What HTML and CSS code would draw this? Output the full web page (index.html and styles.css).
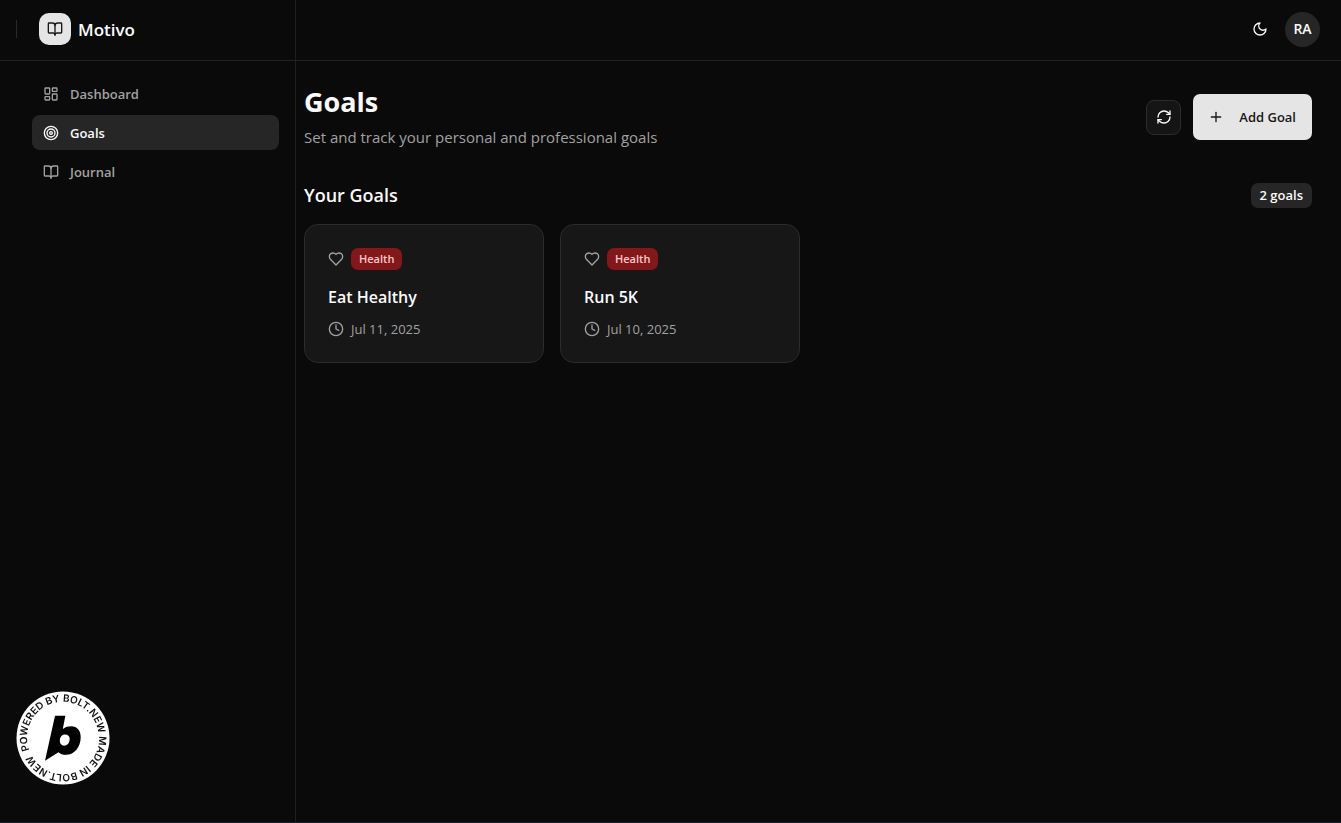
FILE: index.html
```html
<!DOCTYPE html>
<html lang="en">
<head>
  <meta charset="utf-8">
  <meta name="viewport" content="width=device-width, initial-scale=1">
  <title>Motivo - Goals</title>
  <link rel="stylesheet" href="styles.css">
</head>
<body>
  <svg class="sprite" aria-hidden="true">
    <symbol id="book" viewBox="0 0 24 24"><path d="M12 7v14"/><path d="M3 18a1 1 0 0 1-1-1V4a1 1 0 0 1 1-1h5a4 4 0 0 1 4 4 4 4 0 0 1 4-4h5a1 1 0 0 1 1 1v13a1 1 0 0 1-1 1h-6a3 3 0 0 0-3 3 3 3 0 0 0-3-3z"/></symbol>
    <symbol id="heart" viewBox="0 0 24 24"><path d="M19 14c1.49-1.46 3-3.21 3-5.5A5.5 5.5 0 0 0 16.5 3c-1.76 0-3 .5-4.5 2-1.5-1.5-2.74-2-4.5-2A5.5 5.5 0 0 0 2 8.500c0 2.300 1.500 4.050 3 5.500l7 7Z"/></symbol>
    <symbol id="clock" viewBox="0 0 24 24"><circle cx="12" cy="12" r="10"/><path d="M12 6v6l4 2"/></symbol>
  </svg>
  <div class="app">
    <aside class="sidebar">
      <div class="brand">
        <span class="brand-rule"></span>
        <span class="brand-mark"><svg class="icon"><use href="#book"/></svg></span>
        <span class="brand-name">Motivo</span>
      </div>
      <nav class="nav" aria-label="Main">
        <a class="nav-link" href="#dashboard">
          <svg class="icon" viewBox="0 0 24 24"><rect width="7" height="9" x="3" y="3" rx="1"/><rect width="7" height="5" x="14" y="3" rx="1"/><rect width="7" height="9" x="14" y="12" rx="1"/><rect width="7" height="5" x="3" y="16" rx="1"/></svg>
          Dashboard
        </a>
        <a class="nav-link active" href="#goals" aria-current="page">
          <svg class="icon" viewBox="0 0 24 24"><circle cx="12" cy="12" r="10"/><circle cx="12" cy="12" r="6"/><circle cx="12" cy="12" r="2"/></svg>
          Goals
        </a>
        <a class="nav-link" href="#journal">
          <svg class="icon"><use href="#book"/></svg>
          Journal
        </a>
      </nav>
    </aside>

    <div class="content">
      <header class="topbar">
        <button class="theme-button" type="button" aria-label="Toggle theme">
          <svg class="icon" viewBox="0 0 24 24"><path d="M12 3a6 6 0 0 0 9 9 9 9 0 1 1-9-9Z"/></svg>
        </button>
        <button class="avatar" type="button">RA</button>
      </header>

      <main class="main">
        <div class="page-head">
          <div>
            <h1 class="page-title">Goals</h1>
            <p class="page-subtitle">Set and track your personal and professional goals</p>
          </div>
          <div class="actions">
            <button class="refresh-button" type="button" aria-label="Refresh">
              <svg class="icon" viewBox="0 0 24 24"><path d="M3 12a9 9 0 0 1 9-9 9.750 9.750 0 0 1 6.740 2.740L21 8"/><path d="M21 3v5h-5"/><path d="M21 12a9 9 0 0 1-9 9 9.750 9.750 0 0 1-6.740-2.740L3 16"/><path d="M8 16H3v5"/></svg>
            </button>
            <button class="add-button" type="button">
              <svg class="icon" viewBox="0 0 24 24"><path d="M5 12h14"/><path d="M12 5v14"/></svg>
              Add Goal
            </button>
          </div>
        </div>

        <section aria-labelledby="your-goals">
          <div class="section-head">
            <h2 class="section-title" id="your-goals">Your Goals</h2>
            <span class="count">2 goals</span>
          </div>
          <div class="cards">
            <article class="card">
              <div class="card-tags"><svg class="icon"><use href="#heart"/></svg><span class="tag">Health</span></div>
              <h3 class="card-title">Eat Healthy</h3>
              <div class="card-date"><svg class="icon"><use href="#clock"/></svg><time datetime="2025-07-11">Jul 11, 2025</time></div>
            </article>
            <article class="card">
              <div class="card-tags"><svg class="icon"><use href="#heart"/></svg><span class="tag">Health</span></div>
              <h3 class="card-title">Run 5K</h3>
              <div class="card-date"><svg class="icon"><use href="#clock"/></svg><time datetime="2025-07-10">Jul 10, 2025</time></div>
            </article>
          </div>
        </section>
      </main>
    </div>
  </div>

  <a class="bolt-badge" href="#bolt" aria-label="Powered by Bolt.new">
    <svg viewBox="0 0 94 94">
      <circle cx="47" cy="47" r="46.500" fill="#fff"/>
      <path id="ring" fill="none" d="M13.400 59.200A35.750 35.750 0 1 1 80.600 34.800A35.750 35.750 0 1 1 13.400 59.200"/>
      <text class="ring-text"><textPath href="#ring">POWERED BY BOLT.NEW MADE IN BOLT.NEW</textPath></text>
      <path fill="#000" fill-rule="evenodd" d="M39 24.700H49.400L46.800 38C49.500 36 52 35.300 55 35.300C61.200 35.300 64.700 39.500 64.700 46C64.700 56 58.500 63.800 50 63.800C46.500 63.800 44 62.800 42.500 61.200L29 69.700ZM49 43.500C46 43.500 43.800 46.200 43.800 49.800C43.800 52.800 45.500 54.700 48 54.700C51.500 54.700 53.700 51.500 53.700 48C53.700 45.200 52 43.500 49 43.500Z"/>
    </svg>
  </a>
</body>
</html>
```
FILE: styles.css
```css
* {
  box-sizing: border-box;
}

body {
  margin: 0;
  background: #0a0a0a;
  color: #fafafa;
  font: 14px/20px "Open Sans", "Noto Sans", sans-serif;
}

h1, h2, h3, p {
  margin: 0;
}

a {
  color: inherit;
  text-decoration: none;
}

button {
  border: 0;
  padding: 0;
  background: none;
  color: inherit;
  font: inherit;
  cursor: pointer;
}

.sprite {
  position: absolute;
  width: 0;
  height: 0;
}

.icon {
  display: block;
  flex: none;
  width: 16px;
  height: 16px;
  fill: none;
  stroke: currentColor;
  stroke-width: 2;
  stroke-linecap: round;
  stroke-linejoin: round;
}

.app {
  display: flex;
  min-height: 100vh;
  border-bottom: 1px solid #182125;
}

.sidebar {
  flex: none;
  width: 296px;
  border-right: 1px solid #1f1f1f;
}

.brand {
  display: flex;
  align-items: center;
  height: 61px;
  padding: 0 16px 2px;
  border-bottom: 1px solid #222;
}

.brand-rule {
  width: 1px;
  height: 18px;
  margin-right: 22px;
  background: #2a2a2a;
}

.brand-mark {
  display: grid;
  place-items: center;
  width: 32px;
  height: 32px;
  margin-right: 7px;
  border-radius: 10px;
  background: #e5e5e5;
  color: #171717;
}

.brand-name {
  padding-top: 1px;
  font-size: 17px;
  font-weight: 600;
}

.nav {
  display: flex;
  flex-direction: column;
  gap: 4px;
  padding: 15px 16px 0 32px;
}

.nav-link {
  display: flex;
  align-items: center;
  gap: 11px;
  height: 35px;
  padding: 0 11px;
  border-radius: 8px;
  color: #a1a1a1;
  font-size: 13px;
  font-weight: 600;
}

.nav-link.active {
  background: #262626;
  color: #fafafa;
}

.content {
  flex: 1;
  min-width: 0;
}

.topbar {
  display: flex;
  align-items: center;
  justify-content: flex-end;
  gap: 8px;
  height: 61px;
  padding: 0 21px 2px;
  border-bottom: 1px solid #222;
}

.theme-button {
  display: grid;
  place-items: center;
  width: 35px;
  height: 35px;
}

.avatar {
  width: 35px;
  height: 35px;
  border-radius: 50%;
  background: #262626;
  font-weight: 600;
}

.main {
  padding: 24px 29px 24px 8px;
}

.page-head {
  display: flex;
  align-items: center;
  justify-content: space-between;
  margin-bottom: 33px;
}

.page-title {
  font-size: 27px;
  line-height: 34px;
  font-weight: 700;
}

.page-subtitle {
  margin-top: 6px;
  color: #a1a1a1;
  font-size: 15px;
  line-height: 24px;
}

.actions {
  display: flex;
  align-items: center;
  gap: 12px;
}

.refresh-button {
  display: grid;
  place-items: center;
  width: 35px;
  height: 35px;
  border: 1px solid #2c2c2c;
  border-radius: 8px;
  background: #151515;
}

.add-button {
  display: flex;
  align-items: center;
  gap: 15px;
  height: 46px;
  padding: 0 16px 0 15px;
  border-radius: 7px;
  background: #e5e5e5;
  color: #171717;
  font-size: 13px;
  font-weight: 600;
}

.section-head {
  display: flex;
  align-items: center;
  justify-content: space-between;
  margin-bottom: 16px;
}

.section-title {
  font-size: 18px;
  line-height: 26px;
  font-weight: 600;
}

.count {
  padding: 2px 9px 3px;
  border-radius: 7px;
  background: #262626;
  font-size: 13px;
  font-weight: 600;
}

.cards {
  display: grid;
  grid-template-columns: repeat(auto-fill, minmax(240px, 1fr));
  gap: 16px;
}

.card {
  padding: 23px;
  border: 1px solid #2b2b2b;
  border-radius: 14px;
  background: #171717;
}

.card-tags,
.card-date {
  display: flex;
  align-items: center;
  gap: 7px;
  color: #a1a1a1;
}

.tag {
  padding: 1px 8px;
  border-radius: 7px;
  background: #82181a;
  color: #ffc9c9;
  font-size: 11px;
  font-weight: 600;
}

.card-title {
  margin: 15px 0 10px;
  font-size: 16px;
  line-height: 24px;
  font-weight: 600;
}

.card-date {
  font-size: 13px;
}

.bolt-badge {
  position: fixed;
  left: 16px;
  bottom: 38px;
  width: 94px;
  height: 94px;
}

.ring-text {
  font: 600 10px Inter, sans-serif;
  fill: #111;
}
```
